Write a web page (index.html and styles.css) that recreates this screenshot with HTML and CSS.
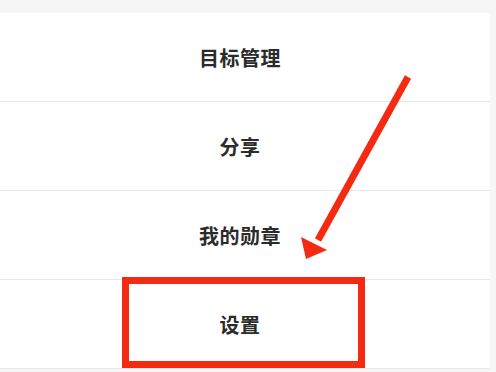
FILE: index.html
```html
<!DOCTYPE html>
<html lang="zh-CN">
<head>
<meta charset="utf-8">
<link rel="stylesheet" href="styles.css">
</head>
<body>
<div class="page">
  <div class="topband"></div>
  <ul class="menu">
    <li class="item">目标管理</li>
    <li class="item">分享</li>
    <li class="item">我的勋章</li>
    <li class="item">设置</li>
  </ul>
  <div class="highlight"></div>
  <svg class="arrow" width="496" height="372" viewBox="0 0 496 372">
    <line x1="408" y1="77" x2="318" y2="240" stroke="#f42b12" stroke-width="7" stroke-linecap="butt"/>
    <polygon points="306,259 301,237 327,250" fill="#f42b12"/>
  </svg>
</div>
</body>
</html>
```
FILE: styles.css
```css
html, body {
  margin: 0;
  padding: 0;
}
body {
  background: #f6f6f6;
  font-family: "Noto Sans CJK SC", "Noto Sans", sans-serif;
}
.page {
  position: relative;
  width: 496px;
  height: 372px;
  overflow: hidden;
}
.topband {
  height: 13px;
  background: #f6f6f6;
}
.menu {
  list-style: none;
  margin: 0;
  padding: 0;
  width: 490px;
  background: #ffffff;
}
.item {
  height: 88px;
  border-bottom: 1px solid #e9e9e9;
  display: flex;
  align-items: center;
  justify-content: center;
  padding-right: 10px;
  font-size: 20px;
  font-weight: 700;
  color: #2b2b2b;
  letter-spacing: 0.5px;
}
.highlight {
  position: absolute;
  left: 122px;
  top: 277px;
  width: 243px;
  height: 91px;
  box-sizing: border-box;
  border: 7px solid #f42b12;
}
.arrow {
  position: absolute;
  left: 0;
  top: 0;
}
```
